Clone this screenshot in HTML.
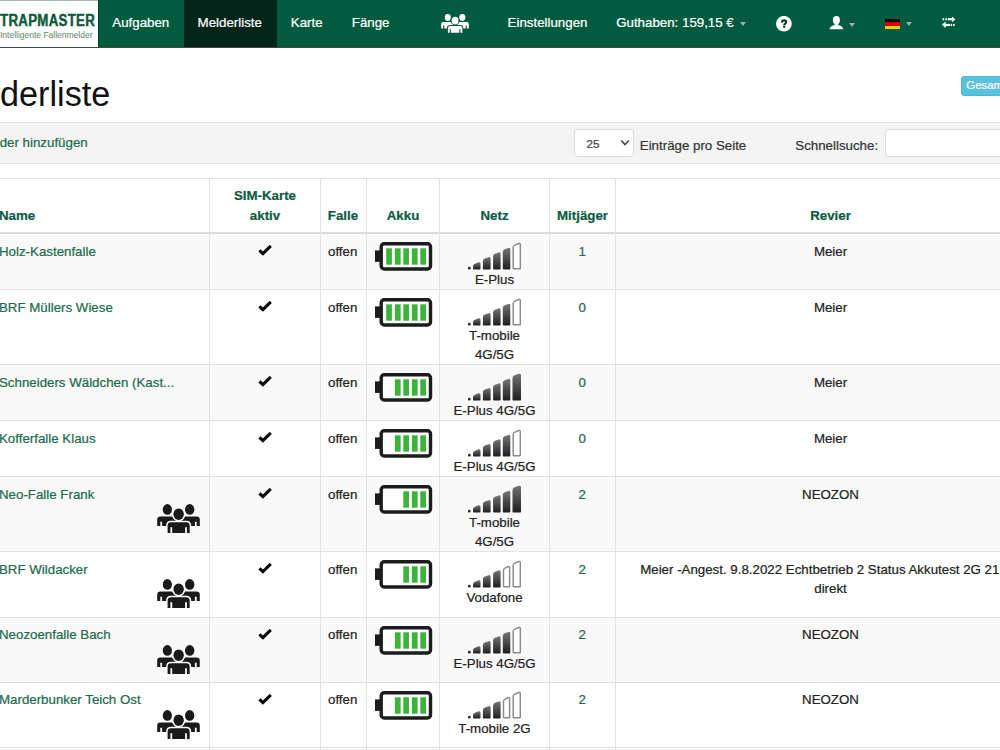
<!DOCTYPE html><html><head><meta charset="utf-8"><style>
html,body{margin:0;padding:0;background:#fff;width:1000px;height:750px;overflow:hidden;position:relative;font-family:"Liberation Sans", sans-serif;}
div{box-sizing:border-box;}
.t{-webkit-text-stroke:0.22px currentColor;}
</style></head><body>
<div style="position:absolute;left:0;top:0;width:1000px;height:48px;background:#035b3f;border-bottom:1px solid #3d4a43"></div>
<div style="position:absolute;left:0;top:0;width:97.5px;height:47.4px;background:#fff;border-top:1px solid #a8b8ae"></div>
<div style="position:absolute;left:97.5px;top:0;width:1px;height:47.5px;background:#02432e"></div>
<div style="position:absolute;left:-0.5px;top:10.8px;font-size:16px;line-height:20px;font-weight:bold;color:#0d5a3b;transform:scaleX(0.83);transform-origin:0 0;white-space:nowrap;letter-spacing:0.35px;-webkit-text-stroke:0.45px #0d5a3b">TRAPMASTER</div>
<div style="position:absolute;left:0px;top:29px;font-size:9.6px;line-height:12px;color:#5f8470;transform:scaleX(0.885);transform-origin:0 0;white-space:nowrap">Intelligente Fallenmelder</div>
<div style="position:absolute;left:184px;top:0;width:93px;height:47px;background:#022419"></div>
<div class="t" style="position:absolute;left:112.30px;top:13.40px;line-height:19px;font-size:13.3px;font-weight:normal;color:#fff;white-space:nowrap;">Aufgaben</div>
<div class="t" style="position:absolute;left:197.60px;top:13.40px;line-height:19px;font-size:13.3px;font-weight:normal;color:#fff;white-space:nowrap;">Melderliste</div>
<div class="t" style="position:absolute;left:290.80px;top:13.40px;line-height:19px;font-size:13.3px;font-weight:normal;color:#fff;white-space:nowrap;">Karte</div>
<div class="t" style="position:absolute;left:351.80px;top:13.40px;line-height:19px;font-size:13.3px;font-weight:normal;color:#fff;white-space:nowrap;">Fänge</div>
<div class="t" style="position:absolute;left:507.60px;top:13.40px;line-height:19px;font-size:13.3px;font-weight:normal;color:#fff;white-space:nowrap;">Einstellungen</div>
<div class="t" style="position:absolute;left:616.20px;top:13.40px;line-height:19px;font-size:13.3px;font-weight:normal;color:#fff;white-space:nowrap;">Guthaben: 159,15 €</div>
<div style="position:absolute;left:740.2px;top:22.1px;width:0;height:0;border-left:3.9px solid transparent;border-right:3.9px solid transparent;border-top:4.1px solid #a9a9a9"></div>
<div style="position:absolute;left:848.8px;top:22.5px;width:0;height:0;border-left:3.9px solid transparent;border-right:3.9px solid transparent;border-top:4.1px solid #a9a9a9"></div>
<div style="position:absolute;left:905.8px;top:22.0px;width:0;height:0;border-left:3.9px solid transparent;border-right:3.9px solid transparent;border-top:4.1px solid #a9a9a9"></div>
<svg style="position:absolute;left:441px;top:14px" width="28" height="18.9" viewBox="0 0 43 29" overflow="visible"><g fill="#fff"><ellipse cx="10.35" cy="5.4" rx="4.6" ry="5.3"/><ellipse cx="32.7" cy="5.4" rx="4.7" ry="5.3"/><path d="M0.2,22.1 L0.2,15.600000000000001 Q0.2,12.4 3.4000000000000004,12.4 L18.3,12.4 Q21.5,12.4 21.5,15.600000000000001 L21.5,22.1 L18.4,22.1 L18.4,17.8 L16.599999999999998,17.8 L16.599999999999998,22.1 L5.1000000000000005,22.1 L5.1000000000000005,17.8 L3.3000000000000003,17.8 L3.3000000000000003,22.1 Z"/><path d="M21.5,22.1 L21.5,15.600000000000001 Q21.5,12.4 24.7,12.4 L39.599999999999994,12.4 Q42.8,12.4 42.8,15.600000000000001 L42.8,22.1 L39.699999999999996,22.1 L39.699999999999996,17.8 L37.9,17.8 L37.9,22.1 L26.400000000000002,22.1 L26.400000000000002,17.8 L24.6,17.8 L24.6,22.1 Z"/></g><g fill="#035b3f" stroke="#035b3f" stroke-width="3"><ellipse cx="21.65" cy="10.2" rx="5.2" ry="5.8"/><path d="M10.6,28.9 L10.6,21.7 Q10.6,18.3 14.0,18.3 L29.300000000000004,18.3 Q32.7,18.3 32.7,21.7 L32.7,28.9 L29.900000000000002,28.9 L29.900000000000002,23.3 L28.1,23.3 L28.1,28.9 L15.2,28.9 L15.2,23.3 L13.399999999999999,23.3 L13.399999999999999,28.9 Z"/></g><g fill="#fff"><ellipse cx="21.65" cy="10.2" rx="5.2" ry="5.8"/><path d="M10.6,28.9 L10.6,21.7 Q10.6,18.3 14.0,18.3 L29.300000000000004,18.3 Q32.7,18.3 32.7,21.7 L32.7,28.9 L29.900000000000002,28.9 L29.900000000000002,23.3 L28.1,23.3 L28.1,28.9 L15.2,28.9 L15.2,23.3 L13.399999999999999,23.3 L13.399999999999999,28.9 Z"/></g></svg>
<svg style="position:absolute;left:776px;top:15.6px" width="16" height="16" viewBox="0 0 16 16"><circle cx="7.9" cy="7.75" r="7.85" fill="#fff"/><path d="M6.0,6.5 C6.0,5.0 6.9,4.4 8.1,4.4 C9.4,4.4 10.2,5.1 10.2,6.1 C10.2,7.2 9.3,7.6 8.7,8.1 C8.3,8.5 8.2,8.8 8.2,9.4" fill="none" stroke="#063b2a" stroke-width="2.1"/><rect x="7.15" y="10.1" width="2.1" height="1.8" fill="#063b2a"/></svg>
<svg style="position:absolute;left:829px;top:15.6px" width="15" height="14" viewBox="0 0 15 14"><path fill="#fff" d="M7.4,0 C9.9,0 10.9,1.6 10.9,4.0 C10.9,6.0 10.1,7.4 9.2,8.2 L9.2,8.9 C12.2,9.6 13.9,10.9 14.3,13.3 L0.5,13.3 C0.9,10.9 2.6,9.6 5.6,8.9 L5.6,8.2 C4.7,7.4 3.9,6.0 3.9,4.0 C3.9,1.6 4.9,0 7.4,0 Z"/></svg>
<div style="position:absolute;left:885px;top:19.2px;width:15px;height:9.8px;background:linear-gradient(#000 0,#000 33.3%,#dd0000 33.3%,#dd0000 66.6%,#ffce00 66.6%)"></div>
<svg style="position:absolute;left:942px;top:15.5px" width="14" height="13" viewBox="0 0 14 13"><g fill="#fff"><path d="M10,0.4 L13.4,3.3 L10,6.2 Z"/><rect x="5.8" y="2.2" width="4.4" height="2.1"/><rect x="0.6" y="2.2" width="1.5" height="2.1"/><rect x="3.3" y="2.2" width="1.6" height="2.1"/><path d="M3.6,5.5 L-0.1,8.7 L3.6,12 Z"/><rect x="3.4" y="7.9" width="4.6" height="2.2"/><rect x="8.6" y="7.9" width="1.5" height="2.2"/><rect x="11.1" y="7.9" width="1.5" height="2.2"/></g></svg>
<div style="position:absolute;left:0.1px;top:74.2px;font-size:34.2px;line-height:40px;color:#111;white-space:nowrap">derliste</div>
<div style="position:absolute;left:960.7px;top:75.8px;width:60px;height:20.2px;background:#5bc0de;border:1px solid #46b8da;border-radius:3px"></div>
<div class="t" style="position:absolute;left:966.30px;top:75.93px;line-height:19px;font-size:11.4px;font-weight:normal;color:#fff;white-space:nowrap;">Gesamt</div>
<div style="position:absolute;left:0;top:122px;width:1000px;height:42px;background:#f4f4f4;border-top:1px solid #e3e3e3;border-bottom:1px solid #e3e3e3"></div>
<div class="t" style="position:absolute;left:-0.30px;top:133.30px;line-height:19px;font-size:13.3px;font-weight:normal;color:#1d6a4f;white-space:nowrap;">der hinzufügen</div>
<div style="position:absolute;left:573.5px;top:128.8px;width:60.2px;height:28px;background:#fff;border:1px solid #dcdcdc;border-radius:4px"></div>
<div class="t" style="position:absolute;left:586.60px;top:133.63px;line-height:19px;font-size:11.7px;font-weight:normal;color:#444;white-space:nowrap;">25</div>
<svg style="position:absolute;left:620px;top:139px" width="10" height="8" viewBox="0 0 10 8"><path d="M1.2,1.5 L5,5.6 L8.8,1.5" fill="none" stroke="#444" stroke-width="1.5"/></svg>
<div class="t" style="position:absolute;left:639.80px;top:136.30px;line-height:19px;font-size:13.3px;font-weight:normal;color:#333;white-space:nowrap;">Einträge pro Seite</div>
<div class="t" style="position:absolute;left:795.30px;top:136.30px;line-height:19px;font-size:13.3px;font-weight:normal;color:#333;white-space:nowrap;">Schnellsuche:</div>
<div style="position:absolute;left:885.3px;top:128.8px;width:200px;height:28.6px;background:#fff;border:1px solid #dcdcdc;border-radius:4px"></div>
<div style="position:absolute;left:0;top:234px;width:1000px;height:55px;background:#f9f9f9"></div>
<div style="position:absolute;left:0;top:365.2px;width:1000px;height:54.80000000000001px;background:#f9f9f9"></div>
<div style="position:absolute;left:0;top:477px;width:1000px;height:73.89999999999998px;background:#f9f9f9"></div>
<div style="position:absolute;left:0;top:617.6px;width:1000px;height:64.19999999999993px;background:#f9f9f9"></div>
<div style="position:absolute;left:0;top:748.2px;width:1000px;height:2px;background:#f9f9f9"></div>
<div style="position:absolute;left:0;top:178px;width:1000px;height:1px;background:#e2e2e2"></div>
<div style="position:absolute;left:0;top:232.2px;width:1000px;height:2px;background:#dcdcdc"></div>
<div style="position:absolute;left:0;top:289px;width:1000px;height:1px;background:#e2e2e2"></div>
<div style="position:absolute;left:0;top:364.2px;width:1000px;height:1px;background:#e2e2e2"></div>
<div style="position:absolute;left:0;top:420px;width:1000px;height:1px;background:#e2e2e2"></div>
<div style="position:absolute;left:0;top:476px;width:1000px;height:1px;background:#e2e2e2"></div>
<div style="position:absolute;left:0;top:550.9px;width:1000px;height:1px;background:#e2e2e2"></div>
<div style="position:absolute;left:0;top:616.6px;width:1000px;height:1px;background:#e2e2e2"></div>
<div style="position:absolute;left:0;top:681.8px;width:1000px;height:1px;background:#e2e2e2"></div>
<div style="position:absolute;left:0;top:747.2px;width:1000px;height:1px;background:#e2e2e2"></div>
<div style="position:absolute;left:208.7px;top:178px;width:1px;height:572px;background:#e2e2e2"></div>
<div style="position:absolute;left:320.0px;top:178px;width:1px;height:572px;background:#e2e2e2"></div>
<div style="position:absolute;left:366.2px;top:178px;width:1px;height:572px;background:#e2e2e2"></div>
<div style="position:absolute;left:439.3px;top:178px;width:1px;height:572px;background:#e2e2e2"></div>
<div style="position:absolute;left:548.7px;top:178px;width:1px;height:572px;background:#e2e2e2"></div>
<div style="position:absolute;left:615.2px;top:178px;width:1px;height:572px;background:#e2e2e2"></div>
<div class="t" style="position:absolute;left:-1.00px;top:205.50px;line-height:19px;font-size:13.3px;font-weight:bold;color:#0d5b45;white-space:nowrap;">Name</div>
<div class="t" style="position:absolute;left:-35.00px;width:600px;text-align:center;top:186.10px;line-height:19px;font-size:13.3px;font-weight:bold;color:#0d5b45;white-space:nowrap;">SIM-Karte</div>
<div class="t" style="position:absolute;left:-35.00px;width:600px;text-align:center;top:205.50px;line-height:19px;font-size:13.3px;font-weight:bold;color:#0d5b45;white-space:nowrap;">aktiv</div>
<div class="t" style="position:absolute;left:327.80px;top:205.50px;line-height:19px;font-size:13.3px;font-weight:bold;color:#0d5b45;white-space:nowrap;">Falle</div>
<div class="t" style="position:absolute;left:103.00px;width:600px;text-align:center;top:205.50px;line-height:19px;font-size:13.3px;font-weight:bold;color:#0d5b45;white-space:nowrap;">Akku</div>
<div class="t" style="position:absolute;left:194.50px;width:600px;text-align:center;top:205.50px;line-height:19px;font-size:13.3px;font-weight:bold;color:#0d5b45;white-space:nowrap;">Netz</div>
<div class="t" style="position:absolute;left:282.50px;width:600px;text-align:center;top:205.50px;line-height:19px;font-size:13.3px;font-weight:bold;color:#0d5b45;white-space:nowrap;">Mitjäger</div>
<div class="t" style="position:absolute;left:530.50px;width:600px;text-align:center;top:205.50px;line-height:19px;font-size:13.3px;font-weight:bold;color:#0d5b45;white-space:nowrap;">Revier</div>
<div class="t" style="position:absolute;left:-1.00px;top:241.60px;line-height:19px;font-size:13.3px;font-weight:normal;color:#1d6a4f;white-space:nowrap;">Holz-Kastenfalle</div>
<svg style="position:absolute;left:258.3px;top:245.2px" width="14" height="12" viewBox="0 0 14 12"><path d="M1.4,5.3 L4.9,8.7 L12.8,0.9" fill="none" stroke="#0a0a0a" stroke-width="3.1" stroke-linecap="butt" stroke-linejoin="miter"/></svg>
<div class="t" style="position:absolute;left:328.00px;top:241.60px;line-height:19px;font-size:13.3px;font-weight:normal;color:#222;white-space:nowrap;">offen</div>
<svg style="position:absolute;left:374.9px;top:242.0px" width="58" height="30" viewBox="0 0 58 30"><rect x="6.2" y="1.75" width="49.3" height="25.2" rx="3" fill="#fff" stroke="#1c1c1c" stroke-width="3.4"/><rect x="0" y="8.4" width="5" height="11.5" fill="#1c1c1c"/><rect x="11.20" y="6.3" width="5.7" height="16.4" fill="#3cb43c"/><rect x="19.90" y="6.3" width="5.7" height="16.4" fill="#3cb43c"/><rect x="28.30" y="6.3" width="5.7" height="16.4" fill="#3cb43c"/><rect x="36.90" y="6.3" width="5.7" height="16.4" fill="#3cb43c"/><rect x="45.30" y="6.3" width="5.7" height="16.4" fill="#3cb43c"/></svg>
<svg style="position:absolute;left:468.00px;top:242.0px" width="54" height="28" viewBox="0 0 54 28"><defs><linearGradient id="sg" x1="0" y1="0" x2="0" y2="1"><stop offset="0" stop-color="#747474"/><stop offset="1" stop-color="#1e1e1e"/></linearGradient></defs><circle cx="1.35" cy="26.2" r="1.4" fill="#2a2a2a"/><path d="M5.80,27.50 Q5.00,27.50 5.00,26.70 L5.00,24.40 Q5.00,22.40 7.00,21.65 L10.50,20.35 Q12.50,19.60 12.50,21.90 L12.50,26.70 Q12.50,27.50 11.70,27.50 Z" fill="url(#sg)"/><path d="M15.70,27.50 Q14.90,27.50 14.90,26.70 L14.90,19.30 Q14.90,17.30 16.90,16.57 L20.60,15.23 Q22.60,14.50 22.60,16.80 L22.60,26.70 Q22.60,27.50 21.80,27.50 Z" fill="url(#sg)"/><path d="M25.90,27.50 Q25.10,27.50 25.10,26.70 L25.10,14.60 Q25.10,12.60 27.10,11.85 L30.60,10.55 Q32.60,9.80 32.60,12.10 L32.60,26.70 Q32.60,27.50 31.80,27.50 Z" fill="url(#sg)"/><path d="M35.60,27.50 Q34.80,27.50 34.80,26.70 L34.80,10.10 Q34.80,8.10 36.80,7.35 L40.30,6.05 Q42.30,5.30 42.30,7.60 L42.30,26.70 Q42.30,27.50 41.50,27.50 Z" fill="url(#sg)"/><path d="M45.80,26.80 Q45.20,26.80 45.20,26.20 L45.20,5.30 Q45.20,3.70 46.80,3.07 L50.70,1.53 Q52.30,0.90 52.30,2.80 L52.30,26.20 Q52.30,26.80 51.70,26.80 Z" fill="#fff" stroke="#8a8a8a" stroke-width="1.45"/></svg>
<div class="t" style="position:absolute;left:194.50px;width:600px;text-align:center;top:270.10px;line-height:19px;font-size:13.3px;font-weight:normal;color:#222;white-space:nowrap;">E-Plus</div>
<div class="t" style="position:absolute;left:282.30px;width:600px;text-align:center;top:241.60px;line-height:19px;font-size:13.3px;font-weight:normal;color:#1d6a4f;white-space:nowrap;">1</div>
<div class="t" style="position:absolute;left:530.50px;width:600px;text-align:center;top:241.60px;line-height:19px;font-size:13.3px;font-weight:normal;color:#222;white-space:nowrap;">Meier</div>
<div class="t" style="position:absolute;left:-1.00px;top:297.60px;line-height:19px;font-size:13.3px;font-weight:normal;color:#1d6a4f;white-space:nowrap;">BRF Müllers Wiese</div>
<svg style="position:absolute;left:258.3px;top:301.2px" width="14" height="12" viewBox="0 0 14 12"><path d="M1.4,5.3 L4.9,8.7 L12.8,0.9" fill="none" stroke="#0a0a0a" stroke-width="3.1" stroke-linecap="butt" stroke-linejoin="miter"/></svg>
<div class="t" style="position:absolute;left:328.00px;top:297.60px;line-height:19px;font-size:13.3px;font-weight:normal;color:#222;white-space:nowrap;">offen</div>
<svg style="position:absolute;left:374.9px;top:298.0px" width="58" height="30" viewBox="0 0 58 30"><rect x="6.2" y="1.75" width="49.3" height="25.2" rx="3" fill="#fff" stroke="#1c1c1c" stroke-width="3.4"/><rect x="0" y="8.4" width="5" height="11.5" fill="#1c1c1c"/><rect x="11.20" y="6.3" width="5.7" height="16.4" fill="#3cb43c"/><rect x="19.90" y="6.3" width="5.7" height="16.4" fill="#3cb43c"/><rect x="28.30" y="6.3" width="5.7" height="16.4" fill="#3cb43c"/><rect x="36.90" y="6.3" width="5.7" height="16.4" fill="#3cb43c"/><rect x="45.30" y="6.3" width="5.7" height="16.4" fill="#3cb43c"/></svg>
<svg style="position:absolute;left:468.00px;top:298.0px" width="54" height="28" viewBox="0 0 54 28"><defs><linearGradient id="sg" x1="0" y1="0" x2="0" y2="1"><stop offset="0" stop-color="#747474"/><stop offset="1" stop-color="#1e1e1e"/></linearGradient></defs><circle cx="1.35" cy="26.2" r="1.4" fill="#2a2a2a"/><path d="M5.80,27.50 Q5.00,27.50 5.00,26.70 L5.00,24.40 Q5.00,22.40 7.00,21.65 L10.50,20.35 Q12.50,19.60 12.50,21.90 L12.50,26.70 Q12.50,27.50 11.70,27.50 Z" fill="url(#sg)"/><path d="M15.70,27.50 Q14.90,27.50 14.90,26.70 L14.90,19.30 Q14.90,17.30 16.90,16.57 L20.60,15.23 Q22.60,14.50 22.60,16.80 L22.60,26.70 Q22.60,27.50 21.80,27.50 Z" fill="url(#sg)"/><path d="M25.90,27.50 Q25.10,27.50 25.10,26.70 L25.10,14.60 Q25.10,12.60 27.10,11.85 L30.60,10.55 Q32.60,9.80 32.60,12.10 L32.60,26.70 Q32.60,27.50 31.80,27.50 Z" fill="url(#sg)"/><path d="M35.60,27.50 Q34.80,27.50 34.80,26.70 L34.80,10.10 Q34.80,8.10 36.80,7.35 L40.30,6.05 Q42.30,5.30 42.30,7.60 L42.30,26.70 Q42.30,27.50 41.50,27.50 Z" fill="url(#sg)"/><path d="M45.80,26.80 Q45.20,26.80 45.20,26.20 L45.20,5.30 Q45.20,3.70 46.80,3.07 L50.70,1.53 Q52.30,0.90 52.30,2.80 L52.30,26.20 Q52.30,26.80 51.70,26.80 Z" fill="#fff" stroke="#8a8a8a" stroke-width="1.45"/></svg>
<div class="t" style="position:absolute;left:194.50px;width:600px;text-align:center;top:326.10px;line-height:19px;font-size:13.3px;font-weight:normal;color:#222;white-space:nowrap;">T-mobile</div>
<div class="t" style="position:absolute;left:194.50px;width:600px;text-align:center;top:345.10px;line-height:19px;font-size:13.3px;font-weight:normal;color:#222;white-space:nowrap;">4G/5G</div>
<div class="t" style="position:absolute;left:282.30px;width:600px;text-align:center;top:297.60px;line-height:19px;font-size:13.3px;font-weight:normal;color:#1d6a4f;white-space:nowrap;">0</div>
<div class="t" style="position:absolute;left:530.50px;width:600px;text-align:center;top:297.60px;line-height:19px;font-size:13.3px;font-weight:normal;color:#222;white-space:nowrap;">Meier</div>
<div class="t" style="position:absolute;left:-1.00px;top:372.80px;line-height:19px;font-size:13.3px;font-weight:normal;color:#1d6a4f;white-space:nowrap;">Schneiders Wäldchen (Kast...</div>
<svg style="position:absolute;left:258.3px;top:376.4px" width="14" height="12" viewBox="0 0 14 12"><path d="M1.4,5.3 L4.9,8.7 L12.8,0.9" fill="none" stroke="#0a0a0a" stroke-width="3.1" stroke-linecap="butt" stroke-linejoin="miter"/></svg>
<div class="t" style="position:absolute;left:328.00px;top:372.80px;line-height:19px;font-size:13.3px;font-weight:normal;color:#222;white-space:nowrap;">offen</div>
<svg style="position:absolute;left:374.9px;top:373.2px" width="58" height="30" viewBox="0 0 58 30"><rect x="6.2" y="1.75" width="49.3" height="25.2" rx="3" fill="#fff" stroke="#1c1c1c" stroke-width="3.4"/><rect x="0" y="8.4" width="5" height="11.5" fill="#1c1c1c"/><rect x="19.90" y="6.3" width="5.7" height="16.4" fill="#3cb43c"/><rect x="28.30" y="6.3" width="5.7" height="16.4" fill="#3cb43c"/><rect x="36.90" y="6.3" width="5.7" height="16.4" fill="#3cb43c"/><rect x="45.30" y="6.3" width="5.7" height="16.4" fill="#3cb43c"/></svg>
<svg style="position:absolute;left:468.00px;top:373.2px" width="54" height="28" viewBox="0 0 54 28"><defs><linearGradient id="sg" x1="0" y1="0" x2="0" y2="1"><stop offset="0" stop-color="#747474"/><stop offset="1" stop-color="#1e1e1e"/></linearGradient></defs><circle cx="1.35" cy="26.2" r="1.4" fill="#2a2a2a"/><path d="M5.80,27.50 Q5.00,27.50 5.00,26.70 L5.00,24.40 Q5.00,22.40 7.00,21.65 L10.50,20.35 Q12.50,19.60 12.50,21.90 L12.50,26.70 Q12.50,27.50 11.70,27.50 Z" fill="url(#sg)"/><path d="M15.70,27.50 Q14.90,27.50 14.90,26.70 L14.90,19.30 Q14.90,17.30 16.90,16.57 L20.60,15.23 Q22.60,14.50 22.60,16.80 L22.60,26.70 Q22.60,27.50 21.80,27.50 Z" fill="url(#sg)"/><path d="M25.90,27.50 Q25.10,27.50 25.10,26.70 L25.10,14.60 Q25.10,12.60 27.10,11.85 L30.60,10.55 Q32.60,9.80 32.60,12.10 L32.60,26.70 Q32.60,27.50 31.80,27.50 Z" fill="url(#sg)"/><path d="M35.60,27.50 Q34.80,27.50 34.80,26.70 L34.80,10.10 Q34.80,8.10 36.80,7.35 L40.30,6.05 Q42.30,5.30 42.30,7.60 L42.30,26.70 Q42.30,27.50 41.50,27.50 Z" fill="url(#sg)"/><path d="M45.30,27.50 Q44.50,27.50 44.50,26.70 L44.50,5.00 Q44.50,3.00 46.50,2.34 L51.00,0.86 Q53.00,0.20 53.00,2.50 L53.00,26.70 Q53.00,27.50 52.20,27.50 Z" fill="url(#sg)"/></svg>
<div class="t" style="position:absolute;left:194.50px;width:600px;text-align:center;top:401.30px;line-height:19px;font-size:13.3px;font-weight:normal;color:#222;white-space:nowrap;">E-Plus 4G/5G</div>
<div class="t" style="position:absolute;left:282.30px;width:600px;text-align:center;top:372.80px;line-height:19px;font-size:13.3px;font-weight:normal;color:#1d6a4f;white-space:nowrap;">0</div>
<div class="t" style="position:absolute;left:530.50px;width:600px;text-align:center;top:372.80px;line-height:19px;font-size:13.3px;font-weight:normal;color:#222;white-space:nowrap;">Meier</div>
<div class="t" style="position:absolute;left:-1.00px;top:428.60px;line-height:19px;font-size:13.3px;font-weight:normal;color:#1d6a4f;white-space:nowrap;">Kofferfalle Klaus</div>
<svg style="position:absolute;left:258.3px;top:432.2px" width="14" height="12" viewBox="0 0 14 12"><path d="M1.4,5.3 L4.9,8.7 L12.8,0.9" fill="none" stroke="#0a0a0a" stroke-width="3.1" stroke-linecap="butt" stroke-linejoin="miter"/></svg>
<div class="t" style="position:absolute;left:328.00px;top:428.60px;line-height:19px;font-size:13.3px;font-weight:normal;color:#222;white-space:nowrap;">offen</div>
<svg style="position:absolute;left:374.9px;top:429.0px" width="58" height="30" viewBox="0 0 58 30"><rect x="6.2" y="1.75" width="49.3" height="25.2" rx="3" fill="#fff" stroke="#1c1c1c" stroke-width="3.4"/><rect x="0" y="8.4" width="5" height="11.5" fill="#1c1c1c"/><rect x="19.90" y="6.3" width="5.7" height="16.4" fill="#3cb43c"/><rect x="28.30" y="6.3" width="5.7" height="16.4" fill="#3cb43c"/><rect x="36.90" y="6.3" width="5.7" height="16.4" fill="#3cb43c"/><rect x="45.30" y="6.3" width="5.7" height="16.4" fill="#3cb43c"/></svg>
<svg style="position:absolute;left:468.00px;top:429.0px" width="54" height="28" viewBox="0 0 54 28"><defs><linearGradient id="sg" x1="0" y1="0" x2="0" y2="1"><stop offset="0" stop-color="#747474"/><stop offset="1" stop-color="#1e1e1e"/></linearGradient></defs><circle cx="1.35" cy="26.2" r="1.4" fill="#2a2a2a"/><path d="M5.80,27.50 Q5.00,27.50 5.00,26.70 L5.00,24.40 Q5.00,22.40 7.00,21.65 L10.50,20.35 Q12.50,19.60 12.50,21.90 L12.50,26.70 Q12.50,27.50 11.70,27.50 Z" fill="url(#sg)"/><path d="M15.70,27.50 Q14.90,27.50 14.90,26.70 L14.90,19.30 Q14.90,17.30 16.90,16.57 L20.60,15.23 Q22.60,14.50 22.60,16.80 L22.60,26.70 Q22.60,27.50 21.80,27.50 Z" fill="url(#sg)"/><path d="M25.90,27.50 Q25.10,27.50 25.10,26.70 L25.10,14.60 Q25.10,12.60 27.10,11.85 L30.60,10.55 Q32.60,9.80 32.60,12.10 L32.60,26.70 Q32.60,27.50 31.80,27.50 Z" fill="url(#sg)"/><path d="M35.60,27.50 Q34.80,27.50 34.80,26.70 L34.80,10.10 Q34.80,8.10 36.80,7.35 L40.30,6.05 Q42.30,5.30 42.30,7.60 L42.30,26.70 Q42.30,27.50 41.50,27.50 Z" fill="url(#sg)"/><path d="M45.80,26.80 Q45.20,26.80 45.20,26.20 L45.20,5.30 Q45.20,3.70 46.80,3.07 L50.70,1.53 Q52.30,0.90 52.30,2.80 L52.30,26.20 Q52.30,26.80 51.70,26.80 Z" fill="#fff" stroke="#8a8a8a" stroke-width="1.45"/></svg>
<div class="t" style="position:absolute;left:194.50px;width:600px;text-align:center;top:457.10px;line-height:19px;font-size:13.3px;font-weight:normal;color:#222;white-space:nowrap;">E-Plus 4G/5G</div>
<div class="t" style="position:absolute;left:282.30px;width:600px;text-align:center;top:428.60px;line-height:19px;font-size:13.3px;font-weight:normal;color:#1d6a4f;white-space:nowrap;">0</div>
<div class="t" style="position:absolute;left:530.50px;width:600px;text-align:center;top:428.60px;line-height:19px;font-size:13.3px;font-weight:normal;color:#222;white-space:nowrap;">Meier</div>
<div class="t" style="position:absolute;left:-1.00px;top:484.60px;line-height:19px;font-size:13.3px;font-weight:normal;color:#1d6a4f;white-space:nowrap;">Neo-Falle Frank</div>
<svg style="position:absolute;left:157.4px;top:504.3px" width="43" height="29" viewBox="0 0 43 29" overflow="visible"><g fill="#1a1a1a"><ellipse cx="10.35" cy="5.4" rx="4.6" ry="5.3"/><ellipse cx="32.7" cy="5.4" rx="4.7" ry="5.3"/><path d="M0.2,22.1 L0.2,15.600000000000001 Q0.2,12.4 3.4000000000000004,12.4 L18.3,12.4 Q21.5,12.4 21.5,15.600000000000001 L21.5,22.1 L18.4,22.1 L18.4,17.8 L16.599999999999998,17.8 L16.599999999999998,22.1 L5.1000000000000005,22.1 L5.1000000000000005,17.8 L3.3000000000000003,17.8 L3.3000000000000003,22.1 Z"/><path d="M21.5,22.1 L21.5,15.600000000000001 Q21.5,12.4 24.7,12.4 L39.599999999999994,12.4 Q42.8,12.4 42.8,15.600000000000001 L42.8,22.1 L39.699999999999996,22.1 L39.699999999999996,17.8 L37.9,17.8 L37.9,22.1 L26.400000000000002,22.1 L26.400000000000002,17.8 L24.6,17.8 L24.6,22.1 Z"/></g><g fill="#f9f9f9" stroke="#f9f9f9" stroke-width="3"><ellipse cx="21.65" cy="10.2" rx="5.2" ry="5.8"/><path d="M10.6,28.9 L10.6,21.7 Q10.6,18.3 14.0,18.3 L29.300000000000004,18.3 Q32.7,18.3 32.7,21.7 L32.7,28.9 L29.900000000000002,28.9 L29.900000000000002,23.3 L28.1,23.3 L28.1,28.9 L15.2,28.9 L15.2,23.3 L13.399999999999999,23.3 L13.399999999999999,28.9 Z"/></g><g fill="#1a1a1a"><ellipse cx="21.65" cy="10.2" rx="5.2" ry="5.8"/><path d="M10.6,28.9 L10.6,21.7 Q10.6,18.3 14.0,18.3 L29.300000000000004,18.3 Q32.7,18.3 32.7,21.7 L32.7,28.9 L29.900000000000002,28.9 L29.900000000000002,23.3 L28.1,23.3 L28.1,28.9 L15.2,28.9 L15.2,23.3 L13.399999999999999,23.3 L13.399999999999999,28.9 Z"/></g></svg>
<svg style="position:absolute;left:258.3px;top:488.2px" width="14" height="12" viewBox="0 0 14 12"><path d="M1.4,5.3 L4.9,8.7 L12.8,0.9" fill="none" stroke="#0a0a0a" stroke-width="3.1" stroke-linecap="butt" stroke-linejoin="miter"/></svg>
<div class="t" style="position:absolute;left:328.00px;top:484.60px;line-height:19px;font-size:13.3px;font-weight:normal;color:#222;white-space:nowrap;">offen</div>
<svg style="position:absolute;left:374.9px;top:485.0px" width="58" height="30" viewBox="0 0 58 30"><rect x="6.2" y="1.75" width="49.3" height="25.2" rx="3" fill="#fff" stroke="#1c1c1c" stroke-width="3.4"/><rect x="0" y="8.4" width="5" height="11.5" fill="#1c1c1c"/><rect x="28.30" y="6.3" width="5.7" height="16.4" fill="#3cb43c"/><rect x="36.90" y="6.3" width="5.7" height="16.4" fill="#3cb43c"/><rect x="45.30" y="6.3" width="5.7" height="16.4" fill="#3cb43c"/></svg>
<svg style="position:absolute;left:468.00px;top:485.0px" width="54" height="28" viewBox="0 0 54 28"><defs><linearGradient id="sg" x1="0" y1="0" x2="0" y2="1"><stop offset="0" stop-color="#747474"/><stop offset="1" stop-color="#1e1e1e"/></linearGradient></defs><circle cx="1.35" cy="26.2" r="1.4" fill="#2a2a2a"/><path d="M5.80,27.50 Q5.00,27.50 5.00,26.70 L5.00,24.40 Q5.00,22.40 7.00,21.65 L10.50,20.35 Q12.50,19.60 12.50,21.90 L12.50,26.70 Q12.50,27.50 11.70,27.50 Z" fill="url(#sg)"/><path d="M15.70,27.50 Q14.90,27.50 14.90,26.70 L14.90,19.30 Q14.90,17.30 16.90,16.57 L20.60,15.23 Q22.60,14.50 22.60,16.80 L22.60,26.70 Q22.60,27.50 21.80,27.50 Z" fill="url(#sg)"/><path d="M25.90,27.50 Q25.10,27.50 25.10,26.70 L25.10,14.60 Q25.10,12.60 27.10,11.85 L30.60,10.55 Q32.60,9.80 32.60,12.10 L32.60,26.70 Q32.60,27.50 31.80,27.50 Z" fill="url(#sg)"/><path d="M35.60,27.50 Q34.80,27.50 34.80,26.70 L34.80,10.10 Q34.80,8.10 36.80,7.35 L40.30,6.05 Q42.30,5.30 42.30,7.60 L42.30,26.70 Q42.30,27.50 41.50,27.50 Z" fill="url(#sg)"/><path d="M45.30,27.50 Q44.50,27.50 44.50,26.70 L44.50,5.00 Q44.50,3.00 46.50,2.34 L51.00,0.86 Q53.00,0.20 53.00,2.50 L53.00,26.70 Q53.00,27.50 52.20,27.50 Z" fill="url(#sg)"/></svg>
<div class="t" style="position:absolute;left:194.50px;width:600px;text-align:center;top:513.10px;line-height:19px;font-size:13.3px;font-weight:normal;color:#222;white-space:nowrap;">T-mobile</div>
<div class="t" style="position:absolute;left:194.50px;width:600px;text-align:center;top:532.10px;line-height:19px;font-size:13.3px;font-weight:normal;color:#222;white-space:nowrap;">4G/5G</div>
<div class="t" style="position:absolute;left:282.30px;width:600px;text-align:center;top:484.60px;line-height:19px;font-size:13.3px;font-weight:normal;color:#1d6a4f;white-space:nowrap;">2</div>
<div class="t" style="position:absolute;left:530.50px;width:600px;text-align:center;top:484.60px;line-height:19px;font-size:13.3px;font-weight:normal;color:#222;white-space:nowrap;">NEOZON</div>
<div class="t" style="position:absolute;left:-1.00px;top:559.50px;line-height:19px;font-size:13.3px;font-weight:normal;color:#1d6a4f;white-space:nowrap;">BRF Wildacker</div>
<svg style="position:absolute;left:157.4px;top:579.1999999999999px" width="43" height="29" viewBox="0 0 43 29" overflow="visible"><g fill="#1a1a1a"><ellipse cx="10.35" cy="5.4" rx="4.6" ry="5.3"/><ellipse cx="32.7" cy="5.4" rx="4.7" ry="5.3"/><path d="M0.2,22.1 L0.2,15.600000000000001 Q0.2,12.4 3.4000000000000004,12.4 L18.3,12.4 Q21.5,12.4 21.5,15.600000000000001 L21.5,22.1 L18.4,22.1 L18.4,17.8 L16.599999999999998,17.8 L16.599999999999998,22.1 L5.1000000000000005,22.1 L5.1000000000000005,17.8 L3.3000000000000003,17.8 L3.3000000000000003,22.1 Z"/><path d="M21.5,22.1 L21.5,15.600000000000001 Q21.5,12.4 24.7,12.4 L39.599999999999994,12.4 Q42.8,12.4 42.8,15.600000000000001 L42.8,22.1 L39.699999999999996,22.1 L39.699999999999996,17.8 L37.9,17.8 L37.9,22.1 L26.400000000000002,22.1 L26.400000000000002,17.8 L24.6,17.8 L24.6,22.1 Z"/></g><g fill="#fff" stroke="#fff" stroke-width="3"><ellipse cx="21.65" cy="10.2" rx="5.2" ry="5.8"/><path d="M10.6,28.9 L10.6,21.7 Q10.6,18.3 14.0,18.3 L29.300000000000004,18.3 Q32.7,18.3 32.7,21.7 L32.7,28.9 L29.900000000000002,28.9 L29.900000000000002,23.3 L28.1,23.3 L28.1,28.9 L15.2,28.9 L15.2,23.3 L13.399999999999999,23.3 L13.399999999999999,28.9 Z"/></g><g fill="#1a1a1a"><ellipse cx="21.65" cy="10.2" rx="5.2" ry="5.8"/><path d="M10.6,28.9 L10.6,21.7 Q10.6,18.3 14.0,18.3 L29.300000000000004,18.3 Q32.7,18.3 32.7,21.7 L32.7,28.9 L29.900000000000002,28.9 L29.900000000000002,23.3 L28.1,23.3 L28.1,28.9 L15.2,28.9 L15.2,23.3 L13.399999999999999,23.3 L13.399999999999999,28.9 Z"/></g></svg>
<svg style="position:absolute;left:258.3px;top:563.1px" width="14" height="12" viewBox="0 0 14 12"><path d="M1.4,5.3 L4.9,8.7 L12.8,0.9" fill="none" stroke="#0a0a0a" stroke-width="3.1" stroke-linecap="butt" stroke-linejoin="miter"/></svg>
<div class="t" style="position:absolute;left:328.00px;top:559.50px;line-height:19px;font-size:13.3px;font-weight:normal;color:#222;white-space:nowrap;">offen</div>
<svg style="position:absolute;left:374.9px;top:559.9px" width="58" height="30" viewBox="0 0 58 30"><rect x="6.2" y="1.75" width="49.3" height="25.2" rx="3" fill="#fff" stroke="#1c1c1c" stroke-width="3.4"/><rect x="0" y="8.4" width="5" height="11.5" fill="#1c1c1c"/><rect x="28.30" y="6.3" width="5.7" height="16.4" fill="#3cb43c"/><rect x="36.90" y="6.3" width="5.7" height="16.4" fill="#3cb43c"/><rect x="45.30" y="6.3" width="5.7" height="16.4" fill="#3cb43c"/></svg>
<svg style="position:absolute;left:468.00px;top:559.9px" width="54" height="28" viewBox="0 0 54 28"><defs><linearGradient id="sg" x1="0" y1="0" x2="0" y2="1"><stop offset="0" stop-color="#747474"/><stop offset="1" stop-color="#1e1e1e"/></linearGradient></defs><circle cx="1.35" cy="26.2" r="1.4" fill="#2a2a2a"/><path d="M5.80,27.50 Q5.00,27.50 5.00,26.70 L5.00,24.40 Q5.00,22.40 7.00,21.65 L10.50,20.35 Q12.50,19.60 12.50,21.90 L12.50,26.70 Q12.50,27.50 11.70,27.50 Z" fill="url(#sg)"/><path d="M15.70,27.50 Q14.90,27.50 14.90,26.70 L14.90,19.30 Q14.90,17.30 16.90,16.57 L20.60,15.23 Q22.60,14.50 22.60,16.80 L22.60,26.70 Q22.60,27.50 21.80,27.50 Z" fill="url(#sg)"/><path d="M25.90,27.50 Q25.10,27.50 25.10,26.70 L25.10,14.60 Q25.10,12.60 27.10,11.85 L30.60,10.55 Q32.60,9.80 32.60,12.10 L32.60,26.70 Q32.60,27.50 31.80,27.50 Z" fill="url(#sg)"/><path d="M36.10,26.80 Q35.50,26.80 35.50,26.20 L35.50,10.40 Q35.50,8.80 37.10,8.07 L40.00,6.73 Q41.60,6.00 41.60,7.90 L41.60,26.20 Q41.60,26.80 41.00,26.80 Z" fill="#fff" stroke="#8a8a8a" stroke-width="1.45"/><path d="M45.80,26.80 Q45.20,26.80 45.20,26.20 L45.20,5.30 Q45.20,3.70 46.80,3.07 L50.70,1.53 Q52.30,0.90 52.30,2.80 L52.30,26.20 Q52.30,26.80 51.70,26.80 Z" fill="#fff" stroke="#8a8a8a" stroke-width="1.45"/></svg>
<div class="t" style="position:absolute;left:194.50px;width:600px;text-align:center;top:588.00px;line-height:19px;font-size:13.3px;font-weight:normal;color:#222;white-space:nowrap;">Vodafone</div>
<div class="t" style="position:absolute;left:282.30px;width:600px;text-align:center;top:559.50px;line-height:19px;font-size:13.3px;font-weight:normal;color:#1d6a4f;white-space:nowrap;">2</div>
<div class="t" style="position:absolute;left:640.20px;top:559.50px;line-height:19px;font-size:13.3px;font-weight:normal;color:#222;white-space:nowrap;">Meier -Angest. 9.8.2022 Echtbetrieb 2 Status Akkutest 2G 21</div>
<div class="t" style="position:absolute;left:530.50px;width:600px;text-align:center;top:578.50px;line-height:19px;font-size:13.3px;font-weight:normal;color:#222;white-space:nowrap;">direkt</div>
<div class="t" style="position:absolute;left:-1.00px;top:625.20px;line-height:19px;font-size:13.3px;font-weight:normal;color:#1d6a4f;white-space:nowrap;">Neozoenfalle Bach</div>
<svg style="position:absolute;left:157.4px;top:644.9px" width="43" height="29" viewBox="0 0 43 29" overflow="visible"><g fill="#1a1a1a"><ellipse cx="10.35" cy="5.4" rx="4.6" ry="5.3"/><ellipse cx="32.7" cy="5.4" rx="4.7" ry="5.3"/><path d="M0.2,22.1 L0.2,15.600000000000001 Q0.2,12.4 3.4000000000000004,12.4 L18.3,12.4 Q21.5,12.4 21.5,15.600000000000001 L21.5,22.1 L18.4,22.1 L18.4,17.8 L16.599999999999998,17.8 L16.599999999999998,22.1 L5.1000000000000005,22.1 L5.1000000000000005,17.8 L3.3000000000000003,17.8 L3.3000000000000003,22.1 Z"/><path d="M21.5,22.1 L21.5,15.600000000000001 Q21.5,12.4 24.7,12.4 L39.599999999999994,12.4 Q42.8,12.4 42.8,15.600000000000001 L42.8,22.1 L39.699999999999996,22.1 L39.699999999999996,17.8 L37.9,17.8 L37.9,22.1 L26.400000000000002,22.1 L26.400000000000002,17.8 L24.6,17.8 L24.6,22.1 Z"/></g><g fill="#f9f9f9" stroke="#f9f9f9" stroke-width="3"><ellipse cx="21.65" cy="10.2" rx="5.2" ry="5.8"/><path d="M10.6,28.9 L10.6,21.7 Q10.6,18.3 14.0,18.3 L29.300000000000004,18.3 Q32.7,18.3 32.7,21.7 L32.7,28.9 L29.900000000000002,28.9 L29.900000000000002,23.3 L28.1,23.3 L28.1,28.9 L15.2,28.9 L15.2,23.3 L13.399999999999999,23.3 L13.399999999999999,28.9 Z"/></g><g fill="#1a1a1a"><ellipse cx="21.65" cy="10.2" rx="5.2" ry="5.8"/><path d="M10.6,28.9 L10.6,21.7 Q10.6,18.3 14.0,18.3 L29.300000000000004,18.3 Q32.7,18.3 32.7,21.7 L32.7,28.9 L29.900000000000002,28.9 L29.900000000000002,23.3 L28.1,23.3 L28.1,28.9 L15.2,28.9 L15.2,23.3 L13.399999999999999,23.3 L13.399999999999999,28.9 Z"/></g></svg>
<svg style="position:absolute;left:258.3px;top:628.8000000000001px" width="14" height="12" viewBox="0 0 14 12"><path d="M1.4,5.3 L4.9,8.7 L12.8,0.9" fill="none" stroke="#0a0a0a" stroke-width="3.1" stroke-linecap="butt" stroke-linejoin="miter"/></svg>
<div class="t" style="position:absolute;left:328.00px;top:625.20px;line-height:19px;font-size:13.3px;font-weight:normal;color:#222;white-space:nowrap;">offen</div>
<svg style="position:absolute;left:374.9px;top:625.6px" width="58" height="30" viewBox="0 0 58 30"><rect x="6.2" y="1.75" width="49.3" height="25.2" rx="3" fill="#fff" stroke="#1c1c1c" stroke-width="3.4"/><rect x="0" y="8.4" width="5" height="11.5" fill="#1c1c1c"/><rect x="19.90" y="6.3" width="5.7" height="16.4" fill="#3cb43c"/><rect x="28.30" y="6.3" width="5.7" height="16.4" fill="#3cb43c"/><rect x="36.90" y="6.3" width="5.7" height="16.4" fill="#3cb43c"/><rect x="45.30" y="6.3" width="5.7" height="16.4" fill="#3cb43c"/></svg>
<svg style="position:absolute;left:468.00px;top:625.6px" width="54" height="28" viewBox="0 0 54 28"><defs><linearGradient id="sg" x1="0" y1="0" x2="0" y2="1"><stop offset="0" stop-color="#747474"/><stop offset="1" stop-color="#1e1e1e"/></linearGradient></defs><circle cx="1.35" cy="26.2" r="1.4" fill="#2a2a2a"/><path d="M5.80,27.50 Q5.00,27.50 5.00,26.70 L5.00,24.40 Q5.00,22.40 7.00,21.65 L10.50,20.35 Q12.50,19.60 12.50,21.90 L12.50,26.70 Q12.50,27.50 11.70,27.50 Z" fill="url(#sg)"/><path d="M15.70,27.50 Q14.90,27.50 14.90,26.70 L14.90,19.30 Q14.90,17.30 16.90,16.57 L20.60,15.23 Q22.60,14.50 22.60,16.80 L22.60,26.70 Q22.60,27.50 21.80,27.50 Z" fill="url(#sg)"/><path d="M25.90,27.50 Q25.10,27.50 25.10,26.70 L25.10,14.60 Q25.10,12.60 27.10,11.85 L30.60,10.55 Q32.60,9.80 32.60,12.10 L32.60,26.70 Q32.60,27.50 31.80,27.50 Z" fill="url(#sg)"/><path d="M35.60,27.50 Q34.80,27.50 34.80,26.70 L34.80,10.10 Q34.80,8.10 36.80,7.35 L40.30,6.05 Q42.30,5.30 42.30,7.60 L42.30,26.70 Q42.30,27.50 41.50,27.50 Z" fill="url(#sg)"/><path d="M45.80,26.80 Q45.20,26.80 45.20,26.20 L45.20,5.30 Q45.20,3.70 46.80,3.07 L50.70,1.53 Q52.30,0.90 52.30,2.80 L52.30,26.20 Q52.30,26.80 51.70,26.80 Z" fill="#fff" stroke="#8a8a8a" stroke-width="1.45"/></svg>
<div class="t" style="position:absolute;left:194.50px;width:600px;text-align:center;top:653.70px;line-height:19px;font-size:13.3px;font-weight:normal;color:#222;white-space:nowrap;">E-Plus 4G/5G</div>
<div class="t" style="position:absolute;left:282.30px;width:600px;text-align:center;top:625.20px;line-height:19px;font-size:13.3px;font-weight:normal;color:#1d6a4f;white-space:nowrap;">2</div>
<div class="t" style="position:absolute;left:530.50px;width:600px;text-align:center;top:625.20px;line-height:19px;font-size:13.3px;font-weight:normal;color:#222;white-space:nowrap;">NEOZON</div>
<div class="t" style="position:absolute;left:-1.00px;top:690.40px;line-height:19px;font-size:13.3px;font-weight:normal;color:#1d6a4f;white-space:nowrap;">Marderbunker Teich Ost</div>
<svg style="position:absolute;left:157.4px;top:710.0999999999999px" width="43" height="29" viewBox="0 0 43 29" overflow="visible"><g fill="#1a1a1a"><ellipse cx="10.35" cy="5.4" rx="4.6" ry="5.3"/><ellipse cx="32.7" cy="5.4" rx="4.7" ry="5.3"/><path d="M0.2,22.1 L0.2,15.600000000000001 Q0.2,12.4 3.4000000000000004,12.4 L18.3,12.4 Q21.5,12.4 21.5,15.600000000000001 L21.5,22.1 L18.4,22.1 L18.4,17.8 L16.599999999999998,17.8 L16.599999999999998,22.1 L5.1000000000000005,22.1 L5.1000000000000005,17.8 L3.3000000000000003,17.8 L3.3000000000000003,22.1 Z"/><path d="M21.5,22.1 L21.5,15.600000000000001 Q21.5,12.4 24.7,12.4 L39.599999999999994,12.4 Q42.8,12.4 42.8,15.600000000000001 L42.8,22.1 L39.699999999999996,22.1 L39.699999999999996,17.8 L37.9,17.8 L37.9,22.1 L26.400000000000002,22.1 L26.400000000000002,17.8 L24.6,17.8 L24.6,22.1 Z"/></g><g fill="#fff" stroke="#fff" stroke-width="3"><ellipse cx="21.65" cy="10.2" rx="5.2" ry="5.8"/><path d="M10.6,28.9 L10.6,21.7 Q10.6,18.3 14.0,18.3 L29.300000000000004,18.3 Q32.7,18.3 32.7,21.7 L32.7,28.9 L29.900000000000002,28.9 L29.900000000000002,23.3 L28.1,23.3 L28.1,28.9 L15.2,28.9 L15.2,23.3 L13.399999999999999,23.3 L13.399999999999999,28.9 Z"/></g><g fill="#1a1a1a"><ellipse cx="21.65" cy="10.2" rx="5.2" ry="5.8"/><path d="M10.6,28.9 L10.6,21.7 Q10.6,18.3 14.0,18.3 L29.300000000000004,18.3 Q32.7,18.3 32.7,21.7 L32.7,28.9 L29.900000000000002,28.9 L29.900000000000002,23.3 L28.1,23.3 L28.1,28.9 L15.2,28.9 L15.2,23.3 L13.399999999999999,23.3 L13.399999999999999,28.9 Z"/></g></svg>
<svg style="position:absolute;left:258.3px;top:694.0px" width="14" height="12" viewBox="0 0 14 12"><path d="M1.4,5.3 L4.9,8.7 L12.8,0.9" fill="none" stroke="#0a0a0a" stroke-width="3.1" stroke-linecap="butt" stroke-linejoin="miter"/></svg>
<div class="t" style="position:absolute;left:328.00px;top:690.40px;line-height:19px;font-size:13.3px;font-weight:normal;color:#222;white-space:nowrap;">offen</div>
<svg style="position:absolute;left:374.9px;top:690.8px" width="58" height="30" viewBox="0 0 58 30"><rect x="6.2" y="1.75" width="49.3" height="25.2" rx="3" fill="#fff" stroke="#1c1c1c" stroke-width="3.4"/><rect x="0" y="8.4" width="5" height="11.5" fill="#1c1c1c"/><rect x="19.90" y="6.3" width="5.7" height="16.4" fill="#3cb43c"/><rect x="28.30" y="6.3" width="5.7" height="16.4" fill="#3cb43c"/><rect x="36.90" y="6.3" width="5.7" height="16.4" fill="#3cb43c"/><rect x="45.30" y="6.3" width="5.7" height="16.4" fill="#3cb43c"/></svg>
<svg style="position:absolute;left:468.00px;top:690.8px" width="54" height="28" viewBox="0 0 54 28"><defs><linearGradient id="sg" x1="0" y1="0" x2="0" y2="1"><stop offset="0" stop-color="#747474"/><stop offset="1" stop-color="#1e1e1e"/></linearGradient></defs><circle cx="1.35" cy="26.2" r="1.4" fill="#2a2a2a"/><path d="M5.80,27.50 Q5.00,27.50 5.00,26.70 L5.00,24.40 Q5.00,22.40 7.00,21.65 L10.50,20.35 Q12.50,19.60 12.50,21.90 L12.50,26.70 Q12.50,27.50 11.70,27.50 Z" fill="url(#sg)"/><path d="M15.70,27.50 Q14.90,27.50 14.90,26.70 L14.90,19.30 Q14.90,17.30 16.90,16.57 L20.60,15.23 Q22.60,14.50 22.60,16.80 L22.60,26.70 Q22.60,27.50 21.80,27.50 Z" fill="url(#sg)"/><path d="M25.90,27.50 Q25.10,27.50 25.10,26.70 L25.10,14.60 Q25.10,12.60 27.10,11.85 L30.60,10.55 Q32.60,9.80 32.60,12.10 L32.60,26.70 Q32.60,27.50 31.80,27.50 Z" fill="url(#sg)"/><path d="M36.10,26.80 Q35.50,26.80 35.50,26.20 L35.50,10.40 Q35.50,8.80 37.10,8.07 L40.00,6.73 Q41.60,6.00 41.60,7.90 L41.60,26.20 Q41.60,26.80 41.00,26.80 Z" fill="#fff" stroke="#8a8a8a" stroke-width="1.45"/><path d="M45.80,26.80 Q45.20,26.80 45.20,26.20 L45.20,5.30 Q45.20,3.70 46.80,3.07 L50.70,1.53 Q52.30,0.90 52.30,2.80 L52.30,26.20 Q52.30,26.80 51.70,26.80 Z" fill="#fff" stroke="#8a8a8a" stroke-width="1.45"/></svg>
<div class="t" style="position:absolute;left:194.50px;width:600px;text-align:center;top:718.90px;line-height:19px;font-size:13.3px;font-weight:normal;color:#222;white-space:nowrap;">T-mobile 2G</div>
<div class="t" style="position:absolute;left:282.30px;width:600px;text-align:center;top:690.40px;line-height:19px;font-size:13.3px;font-weight:normal;color:#1d6a4f;white-space:nowrap;">2</div>
<div class="t" style="position:absolute;left:530.50px;width:600px;text-align:center;top:690.40px;line-height:19px;font-size:13.3px;font-weight:normal;color:#222;white-space:nowrap;">NEOZON</div>
</body></html>
